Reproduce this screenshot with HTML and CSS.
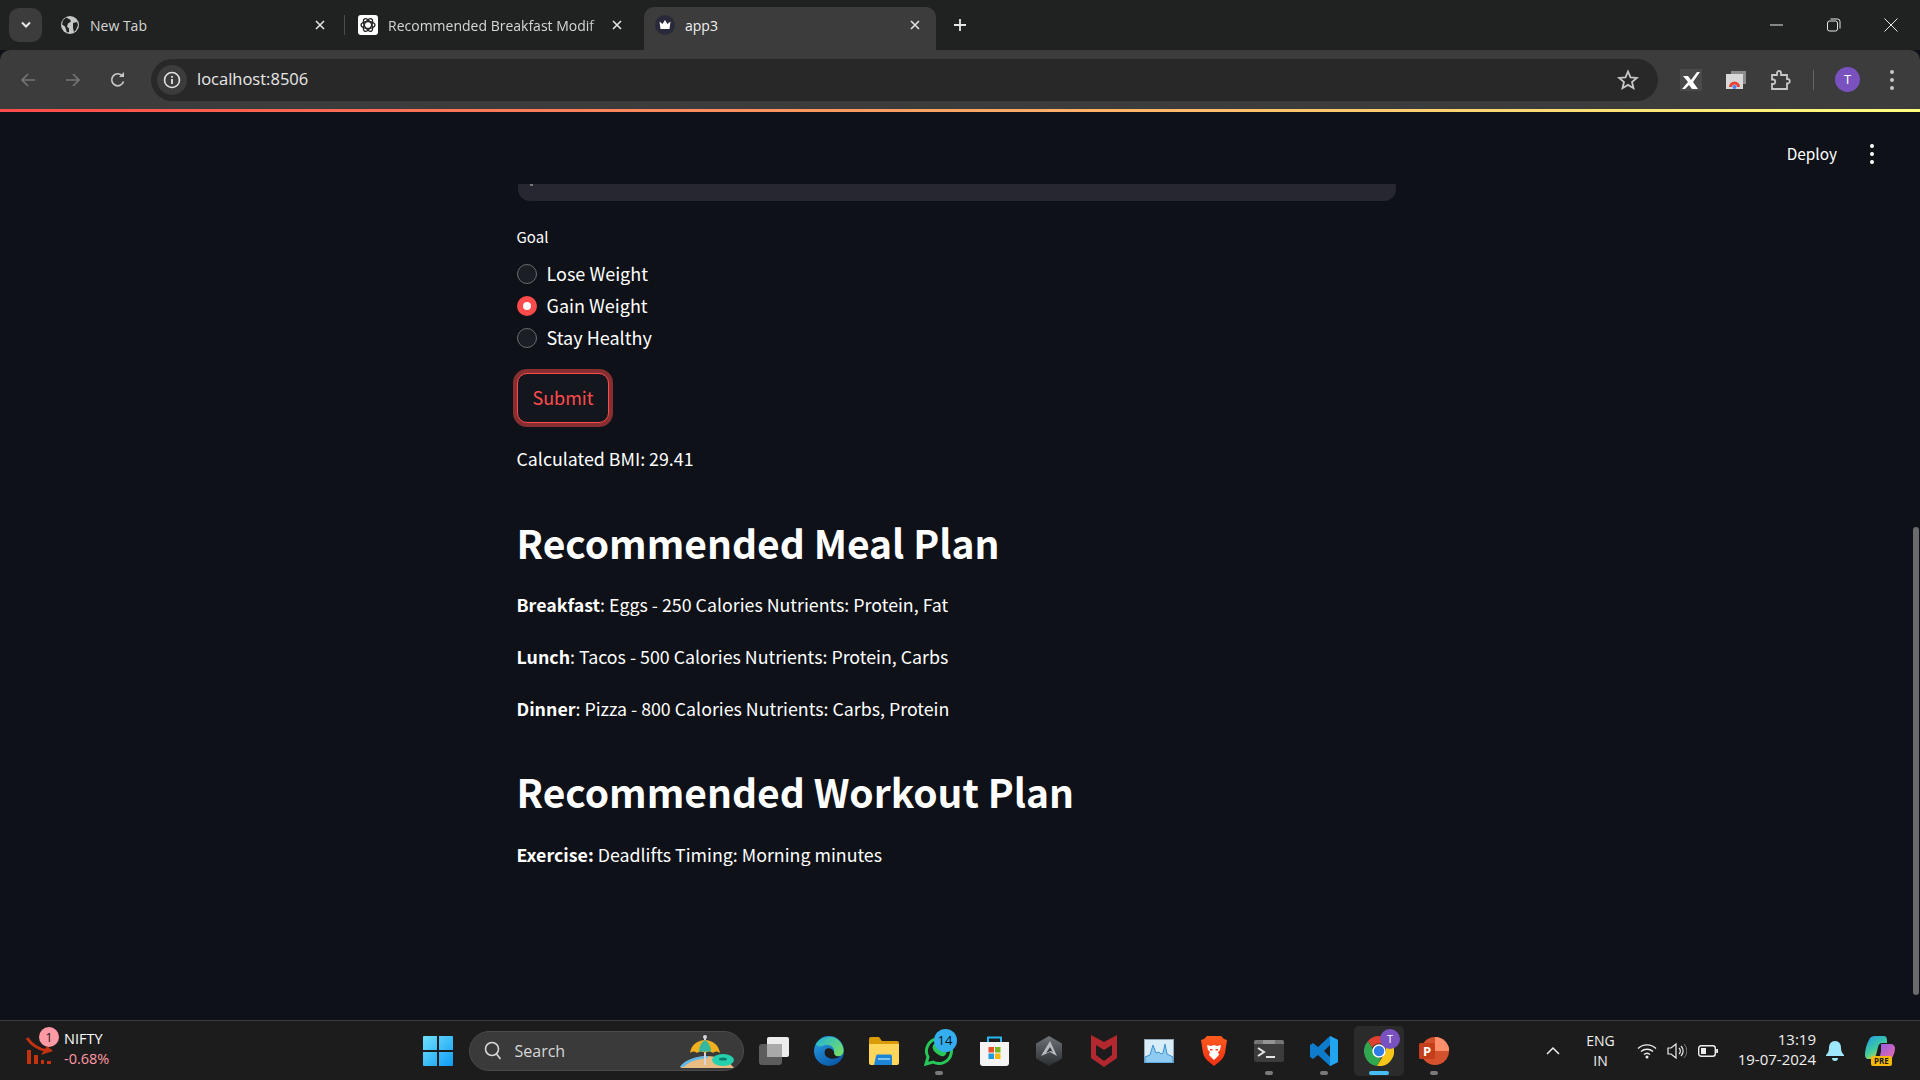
FILE: index.html
```html
<!DOCTYPE html>
<html lang="en">
<head>
    <meta charset="UTF-8">
    <title>app3</title>
    <link rel="stylesheet" href="styles.css">
</head>
<body>
    <!-- tab strip -->
    <div class="tabstrip">
        <div class="tab-search"><svg width="12" height="8" viewBox="0 0 12 8"><path d="M2 1.500l4 4 4-4" fill="none" stroke="#e8e8e8" stroke-width="2"/></svg></div>
        <div class="tab tab-one">
            <svg class="favicon" viewBox="0 0 20 20"><circle cx="10" cy="10" r="9" fill="#c4c7c5"/><path d="M6 2.500l4 2 1 2-3 2-1 3 2 2v3.500l-2 .5-2-6-3-2 1-4zM13 8l4-1 1 3-2 5-2 2-1-4z" fill="#202221"/></svg>
            <span class="tab-title">New Tab</span>
            <svg class="tab-x" viewBox="0 0 20 20"><path d="M6 6l8 8M14 6l-8 8" stroke="#e3e3e3" stroke-width="1.600"/></svg>
        </div>
        <div class="tab-sep"></div>
        <div class="tab tab-two">
            <svg class="favicon" viewBox="0 0 20 20"><rect width="20" height="20" rx="3" fill="#fff"/><g fill="none" stroke="#222" stroke-width="1.300"><ellipse cx="10" cy="10" rx="7" ry="3.500"/><ellipse cx="10" cy="10" rx="7" ry="3.500" transform="rotate(60 10 10)"/><ellipse cx="10" cy="10" rx="7" ry="3.500" transform="rotate(120 10 10)"/></g></svg>
            <span class="tab-title tab-fade">Recommended Breakfast Modif</span>
            <svg class="tab-x" viewBox="0 0 20 20"><path d="M6 6l8 8M14 6l-8 8" stroke="#e3e3e3" stroke-width="1.600"/></svg>
        </div>
        <div class="tab tab-active">
            <svg class="favicon" viewBox="0 0 20 20"><circle cx="10" cy="10" r="10" fill="#282a3a"/><path d="M4.500 6.500l3 2.500L10 5l2.500 4 3-2.500-1 7.500h-9z" fill="#fff"/></svg>
            <span class="tab-title">app3</span>
            <svg class="tab-x" viewBox="0 0 20 20"><path d="M6 6l8 8M14 6l-8 8" stroke="#e3e3e3" stroke-width="1.600"/></svg>
        </div>
        <svg class="tab-plus" viewBox="0 0 20 20"><path d="M10 4v12M4 10h12" stroke="#e8e8e8" stroke-width="1.800"/></svg>
        <div class="win-controls">
            <svg width="14" height="14" viewBox="0 0 14 14"><path d="M0 7h13" stroke="#e8e8e8" stroke-width="1"/></svg>
            <svg width="14" height="14" viewBox="0 0 14 14"><rect x=".5" y="3" width="10" height="10" rx="2" fill="none" stroke="#e8e8e8"/><path d="M3.500 1h7a2.500 2.500 0 0 1 2.500 2.500v7" fill="none" stroke="#e8e8e8"/></svg>
            <svg width="14" height="14" viewBox="0 0 14 14"><path d="M.5.5l13 13M13.500.5l-13 13" stroke="#e8e8e8"/></svg>
        </div>
    </div>

    <!-- toolbar -->
    <div class="toolbar">
        <svg class="nav-icon nav-back" viewBox="0 0 20 20"><path d="M17 10H4M10 4l-6 6 6 6" fill="none" stroke="#757575" stroke-width="1.700"/></svg>
        <svg class="nav-icon nav-fwd" viewBox="0 0 20 20"><path d="M3 10h13M10 4l6 6-6 6" fill="none" stroke="#757575" stroke-width="1.700"/></svg>
        <svg class="nav-icon nav-reload" viewBox="0 0 20 20"><path d="M15.500 11.500A6 6 0 1 1 14 5.500" fill="none" stroke="#c7c7c7" stroke-width="1.700"/><path d="M16 2v5h-5z" fill="#c7c7c7"/></svg>
        <div class="omnibox">
            <div class="site-chip"><svg width="18" height="18" viewBox="0 0 18 18"><circle cx="9" cy="9" r="7.500" fill="none" stroke="#e3e3e3" stroke-width="1.600"/><path d="M9 8v5M9 5v1.800" stroke="#e3e3e3" stroke-width="1.800"/></svg></div>
            <span class="url">localhost:8506</span>
            <svg class="star" width="22" height="22" viewBox="0 0 22 22"><path d="M11 2.500l2.500 5.800 6.300.6-4.800 4.100 1.500 6.200-5.500-3.300-5.500 3.300 1.500-6.200-4.800-4.100 6.300-.6z" fill="none" stroke="#c7c7c7" stroke-width="1.800"/></svg>
        </div>
        <div class="ext-icons">
            <svg class="ext" viewBox="0 0 22 22"><rect width="22" height="22" fill="#4a4a4a"/><path d="M3 7h5l3 4 6-8h3l-7 10 5 7h-6l-3-4-4 4H2l6-7z" fill="#fff"/></svg>
            <svg class="ext" viewBox="0 0 22 22"><rect x="6" y="2" width="15" height="13" fill="#8c8c8c"/><rect x="1" y="5" width="17" height="15" fill="#d8d8d8"/><path d="M4 18a5.500 5.500 0 0 1 11 0h-3a2.500 2.500 0 0 0-5 0z" fill="#ea4335"/><circle cx="9.500" cy="18" r="2" fill="#4285f4"/></svg>
            <svg class="ext" viewBox="0 0 22 22"><path d="M2 6h5V4a2 2 0 0 1 4 0v2h6v4h1a2.300 2.300 0 0 1 0 4.500h-1V20H2v-5h1.500a2.300 2.300 0 0 0 0-4.500H2z" fill="none" stroke="#c7c7c7" stroke-width="1.800"/></svg>
            <div class="tool-sep"></div>
            <div class="avatar">T</div>
            <div class="kebab"><i></i><i></i><i></i></div>
        </div>
    </div>
    <div class="loadbar"></div>

    <!-- streamlit page -->
    <div class="viewport">
        <div class="st-header">
            <span class="deploy">Deploy</span>
            <div class="kebab kebab-white"><i></i><i></i><i></i></div>
        </div>
        <main class="content">
            <div class="input-tail"><span class="input-peek"></span></div>
            <div class="field-label">Goal</div>
            <div class="radio-group">
                <div class="radio-row"><span class="radio"></span>Lose Weight</div>
                <div class="radio-row"><span class="radio radio-on"></span>Gain Weight</div>
                <div class="radio-row"><span class="radio"></span>Stay Healthy</div>
            </div>
            <button class="submit" type="button">Submit</button>
            <p class="bmi">Calculated BMI: 29.41</p>
            <h2 class="plan-title">Recommended Meal Plan</h2>
            <p class="plan-line"><strong>Breakfast</strong>: Eggs - 250 Calories Nutrients: Protein, Fat</p>
            <p class="plan-line"><strong>Lunch</strong>: Tacos - 500 Calories Nutrients: Protein, Carbs</p>
            <p class="plan-line"><strong>Dinner</strong>: Pizza - 800 Calories Nutrients: Carbs, Protein</p>
            <h2 class="plan-title plan-title-2">Recommended Workout Plan</h2>
            <p class="plan-line"><strong>Exercise:</strong> Deadlifts Timing: Morning minutes</p>
        </main>
        <div class="scroll-thumb"></div>
    </div>

    <!-- windows taskbar -->
    <div class="taskbar">
        <div class="widget">
            <svg class="widget-chart" width="30" height="28" viewBox="0 0 30 28"><path d="M2 1c4 6 11 11 20 13" fill="none" stroke="#c4320f" stroke-width="3"/><path d="M16 18l12-4-6-5z" fill="#c4320f"/><path d="M2 13h4v14H2zM9 18h4v9H9zM16 23h3v4h-3zM22 24h4v3h-4z" fill="#c4320f"/></svg>
            <span class="widget-badge">1</span>
            <div class="widget-text">
                <span class="widget-name">NIFTY</span>
                <span class="widget-change">-0.68%</span>
            </div>
        </div>
        <svg class="start" width="30" height="30" viewBox="0 0 30 30">
            <defs><linearGradient id="winBlue" x1="0" y1="0" x2="1" y2="1"><stop offset="0" stop-color="#6fe0fb"/><stop offset="1" stop-color="#0f9cf5"/></linearGradient></defs>
            <path d="M0 1a1 1 0 0 1 1-1h13v14H0zM16 0h13a1 1 0 0 1 1 1v13H16zM0 16h14v14H1a1 1 0 0 1-1-1zM16 16h14v13a1 1 0 0 1-1 1H16z" fill="url(#winBlue)"/>
        </svg>
        <div class="searchbox">
            <svg width="22" height="22" viewBox="0 0 22 22"><circle cx="10" cy="9" r="6.500" fill="none" stroke="#d8d8d8" stroke-width="1.600"/><path d="M14.500 14l4 5" stroke="#d8d8d8" stroke-width="1.600"/></svg>
            <span class="search-word">Search</span>
            <svg class="beach" width="64" height="40" viewBox="0 0 64 40"><path d="M0 36c4-6 14-10 26-11 12 0 22 4 28 12H2z" fill="#e9bd82"/><path d="M0 36c5-7 15-11 28-11v2C16 28 8 31 4 36z" fill="#5fb8ea"/><path d="M25 6v28" stroke="#d8d4de" stroke-width="2"/><circle cx="25" cy="6" r="2" fill="#d8d4de"/><path d="M10 22C11 14 18 9 25 9s14 5 15 13c-3-2-5-2-7 0-3-2-5-2-8 0-3-2-5-2-8 0-2-2-4-2-7 0z" fill="#f2b01e"/><path d="M19 21c0-6 3-10 6-12 3 2 6 6 6 12-2-1-4-1-6 0-2-1-4-1-6 0z" fill="#35b8a2"/><ellipse cx="43" cy="29" rx="11" ry="6" fill="#24d0ae"/><ellipse cx="43" cy="28" rx="4" ry="1.600" fill="#0f7a68"/></svg>
        </div>
        <div class="task-icons">
            <div class="task-icon"><svg width="30" height="30" viewBox="0 0 30 30"><rect y="8" width="23" height="21" rx="3" fill="#5c5c5c"/><rect x="8" y="1" width="22" height="20" rx="2" fill="#ececec"/><rect x="8" y="8" width="15" height="13" fill="#a9a9a9"/></svg></div>
            <div class="task-icon"><svg width="30" height="30" viewBox="0 0 30 30"><defs><linearGradient id="edgeA" x1="0" y1="0" x2=".6" y2="1"><stop offset="0" stop-color="#2aa4e8"/><stop offset="1" stop-color="#0b5aa8"/></linearGradient><linearGradient id="edgeB" x1="0" y1="0" x2="1" y2=".7"><stop offset="0" stop-color="#1fb5d8"/><stop offset="1" stop-color="#72dc6a"/></linearGradient></defs><circle cx="15" cy="15" r="15" fill="url(#edgeA)"/><path d="M2 8C6 1 21-3 27 7c4 6 3 12-1 13-4 1-7-1-6-4 1-4-4-8-9-7-4 1-7 3-9-1z" fill="url(#edgeB)"/><path d="M20 16c-1-3-5-5-8-3-2 2-2 6 1 8 4 3 10 2 14-1-2 1-7 1-7-4z" fill="#1c1c1c"/></svg></div>
            <div class="task-icon"><svg width="30" height="28" viewBox="0 0 30 28"><path d="M0 2a2 2 0 0 1 2-2h8l3 4h15a2 2 0 0 1 2 2v4H0z" fill="#d99c08"/><path d="M0 7h30v19a2 2 0 0 1-2 2H2a2 2 0 0 1-2-2z" fill="#ffd65c"/><path d="M7 19a1.500 1.500 0 0 1 1.500-1.500h13A1.500 1.500 0 0 1 23 19v9H5z" fill="#1c85d6"/><rect x="9" y="21" width="12" height="2" fill="#7fc4ef"/></svg></div>
            <div class="task-icon has-dot">
                <svg width="30" height="30" viewBox="0 0 30 30"><path d="M2 28l2-7A12.500 12.500 0 1 1 9 26z" fill="none" stroke="#27c75a" stroke-width="3"/><path d="M10 8c-2 2-2 5 1 8s7 5 9 4c2-1 3-3 2-4l-3-2-2 1c-2-1-3-3-4-4l1-2-2-3z" fill="#27c75a"/></svg>
                <span class="count-badge">14</span>
            </div>
            <div class="task-icon"><svg width="29" height="30" viewBox="0 0 29 30"><path d="M8 7V1.500h13V7" fill="none" stroke="#29b6ef" stroke-width="2"/><path d="M0 6h29v21a3 3 0 0 1-3 3H3a3 3 0 0 1-3-3z" fill="#f4f4f4"/><rect x="8.500" y="11" width="5.500" height="5.500" fill="#e94f2c"/><rect x="15" y="11" width="5.500" height="5.500" fill="#7cb61f"/><rect x="8.500" y="17.500" width="5.500" height="5.500" fill="#1e9be0"/><rect x="15" y="17.500" width="5.500" height="5.500" fill="#f5b90e"/></svg></div>
            <div class="task-icon"><svg width="26" height="30" viewBox="0 0 26 30"><defs><linearGradient id="hexA" x1="0" y1="0" x2="0" y2="1"><stop offset="0" stop-color="#6e7378"/><stop offset="1" stop-color="#2a2d30"/></linearGradient></defs><path d="M13 0l13 7.500v15L13 30 0 22.500v-15z" fill="url(#hexA)"/><path d="M14 5L5 20l9-4 7 4z" fill="#b9bdc1"/><path d="M14 11l-4 6 5-2 2 1z" fill="#3a3e42"/></svg></div>
            <div class="task-icon"><svg width="28" height="34" viewBox="0 0 28 34"><path d="M1 1l13 7 13-7v23l-13 9-13-9z" fill="#b3282e"/><path d="M6 11l8 5 8-5v10l-8 6-8-6z" fill="#1c1c1c"/></svg></div>
            <div class="task-icon"><svg width="30" height="24" viewBox="0 0 30 24"><rect width="30" height="24" fill="#d8edf8"/><rect x=".5" y=".5" width="29" height="23" fill="none" stroke="#93a9b8"/><path d="M1 18l5-2 3-10 3 8 3-1 2 2 2-1 2-9 2 10 6 3v6H1z" fill="#8fcaf0" stroke="#3a90d0"/></svg></div>
            <div class="task-icon"><svg width="26" height="30" viewBox="0 0 26 30"><defs><linearGradient id="braveA" x1="0" y1="0" x2="0" y2="1"><stop offset="0" stop-color="#ff5a1f"/><stop offset="1" stop-color="#f02f12"/></linearGradient></defs><path d="M6 0h14l3 3 3 1-2 13c-1 4-3 6-6 9l-5 4-5-4c-3-3-5-5-6-9L0 4l3-1z" fill="url(#braveA)"/><path d="M6 9l4 1 3-1 3 1 4-1-1 5-2 2 1 3-5 5-5-5 1-3-2-2z" fill="#fff"/><path d="M9 13h2.500v1.500H9zM14.500 13H17v1.500h-2.500z" fill="#f1431b"/></svg></div>
            <div class="task-icon has-dot"><svg width="30" height="22" viewBox="0 0 30 22"><rect width="30" height="22" rx="2" fill="#3c3c3c"/><path d="M2 0h26a2 2 0 0 1 2 2v2H0V2a2 2 0 0 1 2-2z" fill="#757575"/><rect x="9" width="12" height="4" fill="#949494"/><path d="M4 8l6 4-6 4" fill="none" stroke="#e6e6e6" stroke-width="2"/><path d="M12 17h9" stroke="#e6e6e6" stroke-width="2"/></svg></div>
            <div class="task-icon has-dot"><svg width="30" height="30" viewBox="0 0 30 30"><path d="M1 9l3-2 5 4 12-11 8 4v22l-8 4-12-11-5 4-3-2zM21 9l-6 6 6 6z" fill="#0e7ccb"/><path d="M21 0l8 4v22l-8 4z" fill="#22a5ef"/></svg></div>
            <div class="task-icon task-active">
                <svg width="30" height="30" viewBox="0 0 30 30"><path d="M15 0a15 15 0 0 1 13 7.500H15a7.500 7.500 0 0 0-7 4.500L4 5A15 15 0 0 1 15 0z" fill="#e2402f"/><path d="M4 5l6.500 11a7.500 7.500 0 0 0 6.500 6.300L13 30A15 15 0 0 1 4 5z" fill="#2fa84f"/><path d="M28 7.500A15 15 0 0 1 13 30l6.500-11a7.500 7.500 0 0 0-.5-11.500z" fill="#f5c518"/><circle cx="15" cy="15" r="6" fill="#2f7de9" stroke="#fff" stroke-width="1.500"/></svg>
                <span class="profile-badge">T</span>
            </div>
            <div class="task-icon has-dot"><svg width="30" height="30" viewBox="0 0 30 30"><circle cx="16" cy="15" r="14" fill="#d4512e"/><path d="M16 1a14 14 0 0 1 14 14H16z" fill="#ff8f6b"/><path d="M16 1v14h14a14 14 0 0 0-3-8z" fill="#ff8f6b"/><rect y="7" width="16" height="16" rx="1.500" fill="#c43e1c"/><text x="4" y="20" class="ppt-letter">P</text></svg></div>
        </div>
        <div class="tray">
            <svg class="tray-chevron" width="14" height="10" viewBox="0 0 14 10"><path d="M1 8l6-6 6 6" fill="none" stroke="#eee" stroke-width="1.500"/></svg>
            <div class="lang">ENG<br>IN</div>
            <svg class="tray-wifi" width="20" height="16" viewBox="0 0 20 16"><path d="M1 5.500a13 13 0 0 1 18 0M4 8.500a9 9 0 0 1 12 0M7 11.500a4.500 4.500 0 0 1 6 0" fill="none" stroke="#eee" stroke-width="1.400"/><circle cx="10" cy="14" r="1.500" fill="#eee"/></svg>
            <svg class="tray-sound" width="20" height="18" viewBox="0 0 20 18"><path d="M1 6h3l5-4v14l-5-4H1z" fill="none" stroke="#eee" stroke-width="1.200"/><path d="M12 6a4 4 0 0 1 0 6M14 4a7 7 0 0 1 0 10" fill="none" stroke="#eee" stroke-width="1.200"/><path d="M17 2a10 10 0 0 1 0 14" fill="none" stroke="#777"/></svg>
            <svg class="tray-battery" width="20" height="12" viewBox="0 0 20 12"><rect x=".7" y=".7" width="16.600" height="10.600" rx="2.500" fill="none" stroke="#eee" stroke-width="1.400"/><rect x="3" y="3" width="5" height="6" fill="#eee"/><rect x="18.200" y="4" width="1.800" height="4" fill="#eee"/></svg>
            <div class="clock">13:19<br>19-07-2024</div>
            <svg class="tray-bell" width="18" height="22" viewBox="0 0 18 22"><path d="M9 1c4 0 6 3 6 7 0 3 1 5 3 7v1H0v-1c2-2 3-4 3-7 0-4 2-7 6-7z" fill="#9fe7fb"/><path d="M6 18h6a3 3 0 0 1-6 0z" fill="#9fe7fb"/></svg>
            <div class="copilot">
                <svg width="30" height="24" viewBox="0 0 30 24"><defs><linearGradient id="copA" x1="0" y1="0" x2=".6" y2="1"><stop offset="0" stop-color="#1f9bea"/><stop offset=".6" stop-color="#3fc9a0"/><stop offset="1" stop-color="#c9d84a"/></linearGradient><linearGradient id="copB" x1="0" y1="0" x2="1" y2="1"><stop offset="0" stop-color="#8a5ce8"/><stop offset="1" stop-color="#f06aa8"/></linearGradient></defs><path d="M10 0h9c2 0 3 2 3 4v3h-5c-2 0-3 1-4 4l-2 8c-1 3-3 4-5 4H3c-2 0-3-2-3-4 0-5 2-12 4-15 1-3 3-4 6-4z" fill="url(#copA)"/><path d="M16 8h10c2 0 4 2 4 4 0 3-1 6-2 8-1 3-3 4-6 4H11c2 0 3-2 4-4l1-5c0-3 0-5 0-7z" fill="url(#copB)"/></svg>
                <span class="pre-tag">PRE</span>
            </div>
        </div>
    </div>
</body>
</html>
```

FILE: styles.css
```css
/* General page styling */
* {
    box-sizing: border-box;
}

html, body {
    margin: 0;
    padding: 0;
    height: 100%;
    overflow: hidden;
}

body {
    width: 1920px;
    height: 1080px;
    display: flex;
    flex-direction: column;
    background-color: #0e1117;
    font-family: "Open Sans", "Liberation Sans", sans-serif;
    color: #fff;
}

/* Tab strip */
.tabstrip {
    height: 50px;
    flex: none;
    display: flex;
    align-items: flex-end;
    background-color: #202221;
    font-size: 14px;
}

.tab-search {
    width: 33px;
    height: 34px;
    margin: 0 8px 8px 9px;
    border-radius: 10px;
    background-color: #3c3c3c;
    display: flex;
    align-items: center;
    justify-content: center;
}

.tab {
    height: 43px;
    display: flex;
    align-items: center;
    color: #d6d6d6;
    padding: 0 10px 7px;
}

.tab-one {
    width: 290px;
}

.tab-two {
    width: 289px;
}

.tab-active {
    width: 292px;
    margin-left: 7px;
    padding: 0 11px 7px;
    background-color: #3c3c3c;
    border-radius: 10px 10px 0 0;
    color: #f0f0f0;
}

.tab-sep {
    width: 1px;
    height: 20px;
    margin: 0 3px 15px 4px;
    background-color: #4d4d4d;
}

.favicon {
    width: 20px;
    height: 20px;
    flex: none;
}

.tab-title {
    flex: 1;
    margin-left: 10px;
    white-space: nowrap;
    overflow: hidden;
}

.tab-fade {
    -webkit-mask-image: linear-gradient(to right, #000 92%, transparent);
    mask-image: linear-gradient(to right, #000 92%, transparent);
}

.tab-x {
    width: 20px;
    height: 20px;
    flex: none;
}

.tab-plus {
    width: 20px;
    height: 20px;
    margin: 0 0 15px 14px;
}

.win-controls {
    margin-left: auto;
    height: 50px;
    padding-right: 22px;
    display: flex;
    align-items: center;
    gap: 43px;
}

/* Toolbar */
.toolbar {
    height: 59px;
    flex: none;
    display: flex;
    align-items: center;
    background-color: #3c3c3c;
    border-radius: 10px 10px 0 0;
}

.nav-icon {
    width: 20px;
    height: 20px;
    flex: none;
}

.nav-back {
    margin-left: 18px;
}

.nav-fwd {
    margin-left: 25px;
}

.nav-reload {
    margin-left: 25px;
}

.omnibox {
    width: 1507px;
    height: 42px;
    margin-left: 23px;
    padding: 0 19px 0 6px;
    display: flex;
    align-items: center;
    background-color: #282828;
    border-radius: 21px;
}

.site-chip {
    width: 30px;
    height: 30px;
    border-radius: 50%;
    background-color: #3c3c3c;
    display: flex;
    align-items: center;
    justify-content: center;
}

.url {
    margin: 0 0 2px 10px;
    font-size: 16.500px;
    color: #e8e8e8;
}

.star {
    margin-left: auto;
}

.ext-icons {
    flex: 1;
    display: flex;
    align-items: center;
    padding-left: 22px;
}

.ext {
    width: 22px;
    height: 22px;
    flex: none;
    margin-right: 23px;
}

.tool-sep {
    width: 1px;
    height: 20px;
    margin-left: -2px;
    background-color: #666;
}

.avatar {
    width: 25px;
    height: 25px;
    margin-left: 21px;
    border-radius: 50%;
    background-color: #7a52c0;
    font-size: 13px;
    line-height: 25px;
    text-align: center;
}

.kebab {
    margin-left: 30px;
    display: flex;
    flex-direction: column;
    gap: 4px;
}

.kebab i {
    width: 4px;
    height: 4px;
    border-radius: 50%;
    background-color: #c7c7c7;
}

.kebab-white {
    margin-left: 33px;
}

.kebab-white i {
    background-color: #fff;
}

.loadbar {
    height: 3px;
    flex: none;
    background: linear-gradient(to right, #ff4b4b, #ffff7e);
}

/* Streamlit page */
.viewport {
    flex: 1;
    position: relative;
    overflow: hidden;
    font-family: "Noto Sans CJK SC", "Noto Sans", sans-serif;
}

.st-header {
    position: absolute;
    top: 30px;
    right: 46px;
    height: 24px;
    display: flex;
    align-items: center;
}

.deploy {
    margin-bottom: 2px;
    font-size: 15.400px;
}

.content {
    width: 880px;
    margin-left: 516.500px;
    padding-top: 72px;
}

.input-tail {
    height: 17px;
    margin-left: 1.500px;
    width: 878px;
    background-color: #262730;
    border-radius: 0 0 12px 12px;
}

.input-peek {
    display: block;
    width: 3px;
    height: 2px;
    margin-left: 12px;
    background-color: #777;
}

.field-label {
    margin-top: 24px;
    font-size: 15px;
    line-height: 24px;
}

.radio-group {
    margin-top: 9px;
}

.radio-row {
    height: 32px;
    padding-bottom: 2px;
    display: flex;
    align-items: center;
    font-size: 18px;
}

.radio {
    width: 20px;
    height: 20px;
    margin: 2px 9.500px 0 0.500px;
    border-radius: 50%;
    border: 1px solid #6a6c72;
    background-color: #1c1e26;
}

.radio-on {
    border: 6.500px solid #ff4b4b;
    background-color: #fff;
}

.submit {
    display: block;
    width: 92px;
    height: 50px;
    margin: 19px 0 0 0.500px;
    padding: 0 0 2px;
    font-family: inherit;
    font-size: 18px;
    color: #ff4b4b;
    background-color: #13161d;
    border: 1.250px solid #ff4b4b;
    border-radius: 10px;
    box-shadow: 0 0 0 4px rgba(255, 75, 75, 0.5);
}

.bmi {
    margin: 20px 0 0;
    font-size: 17.800px;
    line-height: 30px;
}

.plan-title {
    margin: 39px 0 0;
    font-size: 39px;
    font-weight: 600;
    line-height: 60px;
}

.plan-title-2 {
    margin-top: 38px;
}

.plan-line {
    margin: 22px 0 0;
    font-size: 17.800px;
    line-height: 30px;
}

.plan-title + .plan-line {
    margin-top: 17px;
}

.plan-title-2 + .plan-line {
    margin-top: 18px;
}

.scroll-thumb {
    position: absolute;
    top: 415px;
    right: 1px;
    width: 6px;
    height: 468px;
    border-radius: 3px;
    background-color: #6b6b6d;
}

/* Windows taskbar */
.taskbar {
    height: 60px;
    flex: none;
    display: flex;
    align-items: center;
    background-color: #1c1c1c;
    border-top: 1px solid #3a3a3a;
    font-family: "Open Sans", "Noto Sans", sans-serif;
}

.widget {
    width: 422.500px;
    flex: none;
    padding-left: 25px;
    position: relative;
    display: flex;
    align-items: center;
}

.widget-badge {
    position: absolute;
    left: 39px;
    top: -2px;
    width: 20px;
    height: 20px;
    border-radius: 50%;
    background-color: #ff99a4;
    color: #1c1c1c;
    font-size: 13px;
    line-height: 20px;
    text-align: center;
}

.widget-text {
    margin: 0 0 3px 9px;
    display: flex;
    flex-direction: column;
    font-size: 14.500px;
    line-height: 20px;
}

.widget-change {
    color: #ff99a4;
}

.start {
    flex: none;
}

.searchbox {
    width: 275px;
    height: 40px;
    margin-left: 16px;
    padding-left: 12px;
    flex: none;
    display: flex;
    align-items: center;
    background-color: #3a3a3a;
    border: 1px solid #4a4a4a;
    border-radius: 20px;
    position: relative;
}

.search-word {
    margin-left: 11px;
    font-size: 16px;
    color: #d8d8d8;
}

.beach {
    position: absolute;
    right: -1px;
    top: -1px;
}

.task-icons {
    margin-left: 3px;
    display: flex;
}

.task-icon {
    width: 55px;
    height: 50px;
    position: relative;
    display: flex;
    align-items: center;
    justify-content: center;
}

.has-dot::after {
    content: "";
    position: absolute;
    left: 23.500px;
    bottom: 1px;
    width: 8px;
    height: 4px;
    border-radius: 2px;
    background-color: #7a7a7a;
}

.task-active {
    width: 50px;
    margin: 0 2.500px;
    background-color: #2b2b2b;
    border-radius: 5px;
}

.task-active::after {
    content: "";
    position: absolute;
    left: 15px;
    bottom: 1px;
    width: 20px;
    height: 4px;
    border-radius: 2px;
    background-color: #47bdf5;
}

.count-badge {
    position: absolute;
    left: 22px;
    top: 3px;
    width: 23px;
    height: 23px;
    border-radius: 50%;
    background-color: #35aef0;
    color: #111;
    font-size: 13px;
    line-height: 23px;
    text-align: center;
}

.profile-badge {
    position: absolute;
    left: 26px;
    top: 3px;
    width: 20px;
    height: 20px;
    border-radius: 50%;
    background-color: #7a52c0;
    font-size: 11px;
    line-height: 20px;
    text-align: center;
}

.ppt-letter {
    font-size: 13px;
    font-weight: 700;
    fill: #fff;
}

.tray {
    flex: 1;
    display: flex;
    align-items: center;
    color: #f0f0f0;
    font-size: 14px;
    line-height: 20px;
}

.tray-chevron {
    margin-left: 84px;
}

.lang {
    width: 30px;
    margin-left: 26px;
    text-align: center;
}

.tray-wifi {
    margin-left: 21.500px;
}

.tray-sound {
    margin-left: 10px;
}

.tray-battery {
    margin-left: 11px;
}

.clock {
    width: 90px;
    margin: 0 0 4px 8px;
    font-size: 15px;
    text-align: right;
}

.tray-bell {
    margin-left: 10px;
}

.copilot {
    margin-left: 21px;
    position: relative;
    width: 30px;
    height: 30px;
}

.pre-tag {
    position: absolute;
    left: 6px;
    top: 20px;
    padding: 0 3px;
    border-radius: 2px;
    background-color: #f5b90e;
    color: #1c1c1c;
    font-size: 8px;
    font-weight: 700;
    line-height: 10px;
}
```
